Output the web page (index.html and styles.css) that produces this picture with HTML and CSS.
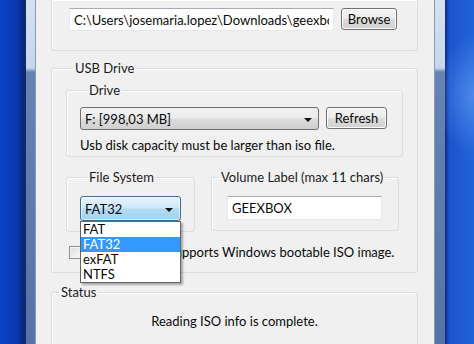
FILE: index.html
```html
<!DOCTYPE html>
<html lang="en">
<head>
    <meta charset="UTF-8">
    <title>GeeXboX USB Installer</title>
    <link rel="stylesheet" href="styles.css">
</head>
<body>
    <div class="desktop-left"></div>
    <div class="window">
        <div class="client">

            <div class="group group-top">
                <div class="row">
                    <input class="text-input path-input" type="text" value="C:\Users\josemaria.lopez\Downloads\geexbox-2.0-i386.iso">
                    <button class="button browse">Browse</button>
                </div>
            </div>

            <fieldset class="group usb">
                <legend>USB Drive</legend>

                <fieldset class="group drive">
                    <legend>Drive</legend>
                    <div class="row">
                        <div class="combo drive-combo">
                            <span>F: [998,03 MB]</span>
                            <span class="arrow"></span>
                        </div>
                        <button class="button refresh">Refresh</button>
                    </div>
                    <div class="hint">Usb disk capacity must be larger than iso file.</div>
                </fieldset>

                <div class="split">
                    <fieldset class="group fs">
                        <legend>File System</legend>
                        <div class="combo-wrap">
                            <div class="combo combo-focus">
                                <span>FAT32</span>
                                <span class="arrow"></span>
                            </div>
                            <ul class="dropdown">
                                <li>FAT</li>
                                <li class="selected">FAT32</li>
                                <li>exFAT</li>
                                <li>NTFS</li>
                            </ul>
                        </div>
                    </fieldset>
                    <fieldset class="group volume">
                        <legend>Volume Label (max 11 chars)</legend>
                        <input class="text-input label-input" type="text" value="GEEXBOX">
                    </fieldset>
                </div>

                <label class="check-row">
                    <span class="checkbox"></span>
                    <span>Use NTFS if it supports Windows bootable ISO image.</span>
                </label>
            </fieldset>

            <fieldset class="group status">
                <legend>Status</legend>
                <div class="status-text">Reading ISO info is complete.</div>
            </fieldset>

        </div>
    </div>
    <div class="desktop-right"></div>
</body>
</html>
```

FILE: styles.css
```css
body {
    margin: 0;
    width: 474px;
    height: 344px;
    overflow: hidden;
    display: flex;
    font-family: "Lato", "Open Sans", sans-serif;
    font-size: 13px;
    color: #0a0a0a;
    background: #0b3cbb;
}
.desktop-left {
    width: 24px;
    background: linear-gradient(to right, #0b41c9 0%, #0a39b0 70%, #062577 100%);
}
.desktop-right {
    flex: 1;
    background:
        radial-gradient(ellipse 40px 60px at 30px 95px, rgba(110, 170, 245, 0.55), rgba(110, 170, 245, 0) 100%),
        linear-gradient(to right, #0b2a7a 0px, #1a52cc 4px, #2263da 100%);
}
.window {
    width: 399px;
    padding: 0 10px 0 10px;
    border-left: 2px solid #122a63;
    background: linear-gradient(to bottom, #d4e1f1 0px, #c6d6ec 68px, #6583b3 72px, #5573a6 100%);
    display: flex;
}
.client {
    width: 398px;
    height: 344px;
    overflow: hidden;
    background: #f0f0f0;
    border-left: 1px solid #8a9ab4;
    border-right: 1px solid #8a9ab4;
    margin-left: -1px;
}
.group {
    border: 1px solid #d5dfe5;
    border-radius: 3px;
    box-shadow: inset 1px 1px 0 #fff;
    margin: 0;
    padding: 0;
    min-width: 0;
}
.group legend {
    padding: 0 2px;
    margin-left: 7px;
    line-height: 16px;
    white-space: nowrap;
    color: #1a1a1a;
}
.group-top {
    margin: 0 16px 0 15px;
    border-top: none;
    border-radius: 0 0 3px 3px;
    padding: 8px 0 19px 17px;
}
.row {
    display: flex;
    align-items: flex-start;
}
.text-input {
    font: inherit;
    color: #0a0a0a;
    box-sizing: border-box;
    background: #fff;
    border: 1px solid #e3e9ef;
    border-top-color: #abadb3;
    padding: 0 4px;
    outline: none;
}
.path-input {
    width: 265px;
    height: 23px;
}
.button {
    font: inherit;
    color: #0a0a0a;
    box-sizing: border-box;
    border: 1px solid #707070;
    border-radius: 3px;
    background: linear-gradient(to bottom, #f4f4f4 0%, #ececec 48%, #dcdcdc 52%, #d0d0d0 100%);
    box-shadow: inset 0 0 0 1px #fcfcfc;
    padding: 0;
}
.browse {
    width: 56px;
    height: 22px;
    margin-left: 7px;
}
.usb {
    margin: 9px 16px 0 15px;
    padding: 0 14px 12px 14px;
}
.drive {
    margin-top: 6px;
    padding: 9px 0 3px 13px;
}
.combo {
    box-sizing: border-box;
    display: flex;
    align-items: center;
    justify-content: space-between;
    border: 1px solid #707070;
    border-radius: 3px;
    background: linear-gradient(to bottom, #f2f2f2 0%, #ebebeb 48%, #dddddd 52%, #cfcfcf 100%);
    padding: 0 6px 0 4px;
}
.arrow {
    width: 0;
    height: 0;
    border-left: 4px solid transparent;
    border-right: 4px solid transparent;
    border-top: 4px solid #111;
    margin-top: 2px;
}
.drive-combo {
    width: 239px;
    height: 23px;
}
.refresh {
    width: 61px;
    height: 22px;
    margin-left: 7px;
}
.hint {
    line-height: 16px;
    margin-top: 7px;
}
.split {
    display: flex;
    align-items: flex-start;
    margin-top: 12px;
}
.fs {
    width: 129px;
    box-sizing: border-box;
    padding: 11px 0 10px 13px;
}
.combo-wrap {
    position: relative;
    width: 101px;
}
.combo-focus {
    height: 25px;
    border-color: #3c6d96;
    background: linear-gradient(to bottom, #e8f4fc 0%, #cde8f8 48%, #b3dbf3 52%, #a4d0ec 100%);
    box-shadow: inset 0 0 0 1px rgba(255, 255, 255, 0.6);
    padding: 0 7px 0 4px;
}
.dropdown {
    position: absolute;
    top: 100%;
    left: 0;
    width: 101px;
    box-sizing: border-box;
    margin: 0;
    padding: 0;
    list-style: none;
    background: #fff;
    border: 1px solid #646464;
    box-shadow: 2px 2px 2px rgba(0, 0, 0, 0.3);
    z-index: 2;
}
.dropdown li {
    height: 15px;
    line-height: 15px;
    padding-left: 2px;
}
.dropdown .selected {
    background: #3399ff;
    color: #fff;
}
.volume {
    width: 188px;
    box-sizing: border-box;
    margin-left: 16px;
    padding: 11px 0 10px 0;
}
.label-input {
    width: 155px;
    height: 24px;
    margin-left: 15px;
}
.check-row {
    display: flex;
    align-items: center;
    line-height: 16px;
    white-space: nowrap;
    margin: 12px 0 0 3px;
}
.checkbox {
    width: 11px;
    height: 11px;
    flex: none;
    border: 1px solid #8f8f8f;
    background: linear-gradient(135deg, #dcdcdc, #fbfbfb);
    box-shadow: inset 0 0 0 1px #f4f4f4;
    margin-right: 5px;
}
.status {
    margin: 11px 16px 0 15px;
    padding: 13px 0 20px 0;
}
.status-text {
    text-align: center;
    line-height: 16px;
}
```
